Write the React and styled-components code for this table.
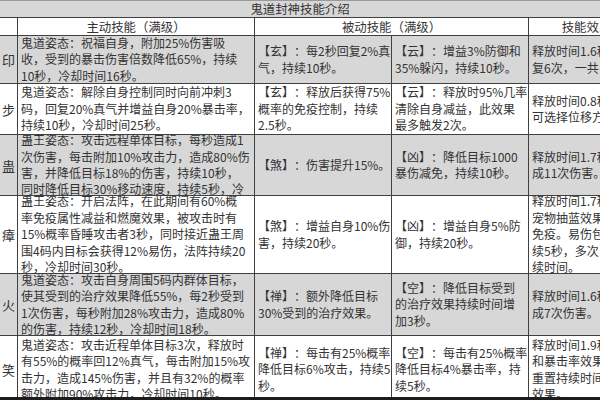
import React from 'react';
import styled, { createGlobalStyle } from 'styled-components';

const GlobalStyle = createGlobalStyle`
    html, body {
        margin: 0;
        padding: 0;
        background: #fff;
    }
    body {
        font-family: "Noto Sans CJK SC", "Liberation Sans", sans-serif;
        color: #333;
        text-spacing-trim: space-all;
    }
`;

const Frame = styled.div`
    width: 600px;
    height: 400px;
    box-sizing: border-box;
    border-bottom: 3px solid #1c1c1c;
    overflow: hidden;
    background: #fff;
`;

const TitleBar = styled.div`
    height: 18px;
    box-sizing: border-box;
    border-top: 1px solid #9a9a9a;
    border-bottom: 1px solid #404040;
    background: #d7d7d7;
    font-size: 12.4px;
    line-height: 16px;
    text-align: center;
`;

const Table = styled.div`
    display: grid;
    width: 645px;
    grid-template-columns: 18px 237px 137px 137px 116px;
    grid-template-rows: 18px 48px 51px 61px 78px 62px 68px;
`;

const HeadCell = styled.div`
    grid-column: span ${p => p.$span || 1};
    display: flex;
    align-items: center;
    justify-content: center;
    box-sizing: border-box;
    border-right: 1px solid #404040;
    border-bottom: 1px solid #404040;
    background: #fff;
    font-size: 12.4px;
    overflow: hidden;
    white-space: nowrap;
`;

const NameCell = styled.div`
    display: flex;
    align-items: center;
    justify-content: center;
    box-sizing: border-box;
    border-right: 1px solid #404040;
    border-bottom: 1px solid #404040;
    background: ${p => (p.$shade ? '#d7d7d7' : '#fff')};
    font-size: 13px;
    overflow: hidden;
`;

const Cell = styled.div`
    display: flex;
    align-items: center;
    box-sizing: border-box;
    padding: 0 2px 0 3px;
    border-right: 1px solid #404040;
    border-bottom: 1px solid #404040;
    background: ${p => (p.$shade ? '#d7d7d7' : '#fff')};
    overflow: hidden;
    white-space: pre;
    font-size: 12px;
    line-height: 16.4px;
`;

const rows = [
    {
        name: '印',
        main: ['鬼道姿态：祝福自身，附加25%伤害吸', '收，受到的暴击伤害倍数降低65%，持续', '10秒，冷却时间16秒。'],
        p1: ['【玄】：每2秒回复2%真', '气，持续10秒。'],
        p2: ['【云】：增益3%防御和', '35%躲闪，持续10秒。'],
        fx: ['释放时间1.6秒，', '复6次，一共'],
    },
    {
        name: '步',
        main: ['鬼道姿态：解除自身控制同时向前冲刺3', '码，回复20%真气并增益自身20%暴击率，', '持续10秒，冷却时间25秒。'],
        p1: ['【玄】：释放后获得75%', '概率的免疫控制，持续', '2.5秒。'],
        p2: ['【云】：释放时95%几率', '清除自身减益，此效果', '最多触发2次。'],
        fx: ['释放时间0.8秒，', '可选择位移方向'],
    },
    {
        name: '蛊',
        main: ['蛊王姿态：攻击远程单体目标，每秒造成1', '次伤害，每击附加10%攻击力，造成80%伤', '害，并降低目标18%的伤害，持续10秒，', '同时降低目标30%移动速度，持续5秒，冷'],
        p1: ['【煞】：伤害提升15%。'],
        p2: ['【凶】：降低目标1000', '暴伤减免，持续10秒。'],
        fx: ['释放时间1.7秒，', '成11次伤害。'],
    },
    {
        name: '瘴',
        main: ['蛊王姿态：开启法阵，在此期间有60%概', '率免疫属性减益和燃魔效果，被攻击时有', '15%概率昏睡攻击者3秒，同时接近蛊王周', '围4码内目标会获得12%易伤，法阵持续20', '秒，冷却时间30秒。'],
        p1: ['【煞】：增益自身10%伤', '害，持续20秒。'],
        p2: ['【凶】：增益自身5%防', '御，持续20秒。'],
        fx: ['释放时间1.7秒，', '宠物抽蓝效果', '免疫。易伤包', '续5秒，多次', '续时间。'],
    },
    {
        name: '火',
        main: ['鬼道姿态：攻击自身周围5码内群体目标，', '使其受到的治疗效果降低55%，每2秒受到', '1次伤害，每秒附加28%攻击力，造成80%', '的伤害，持续12秒，冷却时间18秒。'],
        p1: ['【禅】：额外降低目标', '30%受到的治疗效果。'],
        p2: ['【空】：降低目标受到', '的治疗效果持续时间增', '加3秒。'],
        fx: ['释放时间1.6秒，', '成7次伤害。'],
    },
    {
        name: '笑',
        main: ['鬼道姿态：攻击近程单体目标3次，释放时', '有55%的概率回12%真气，每击附加15%攻', '击力，造成145%伤害，并且有32%的概率', '额外附加90%攻击力，冷却时间10秒。'],
        p1: ['【禅】：每击有25%概率', '降低目标6%攻击，持续5', '秒。'],
        p2: ['【空】：每击有25%概率', '降低目标4%暴击率，持', '续5秒。'],
        fx: ['释放时间1.9秒，', '和暴击率效果', '重置持续时间', '效果。'],
    },
];

const App = () => {
    return (
        <>
            <GlobalStyle />
            <Frame>
                <TitleBar>鬼道封神技能介绍</TitleBar>
                <Table>
                    <HeadCell />
                    <HeadCell>主动技能（满级）</HeadCell>
                    <HeadCell $span={2}>被动技能（满级）</HeadCell>
                    <HeadCell>技能效果</HeadCell>

                    {rows.map((row, i) => {
                        const shade = i % 2 === 0;
                        return (
                            <React.Fragment key={row.name}>
                                <NameCell $shade={shade}>{row.name}</NameCell>
                                <Cell $shade={shade}>{row.main.join('\n')}</Cell>
                                <Cell $shade={shade}>{row.p1.join('\n')}</Cell>
                                <Cell $shade={shade}>{row.p2.join('\n')}</Cell>
                                <Cell $shade={shade}>{row.fx.join('\n')}</Cell>
                            </React.Fragment>
                        );
                    })}
                </Table>
            </Frame>
        </>
    );
};

export default App;
